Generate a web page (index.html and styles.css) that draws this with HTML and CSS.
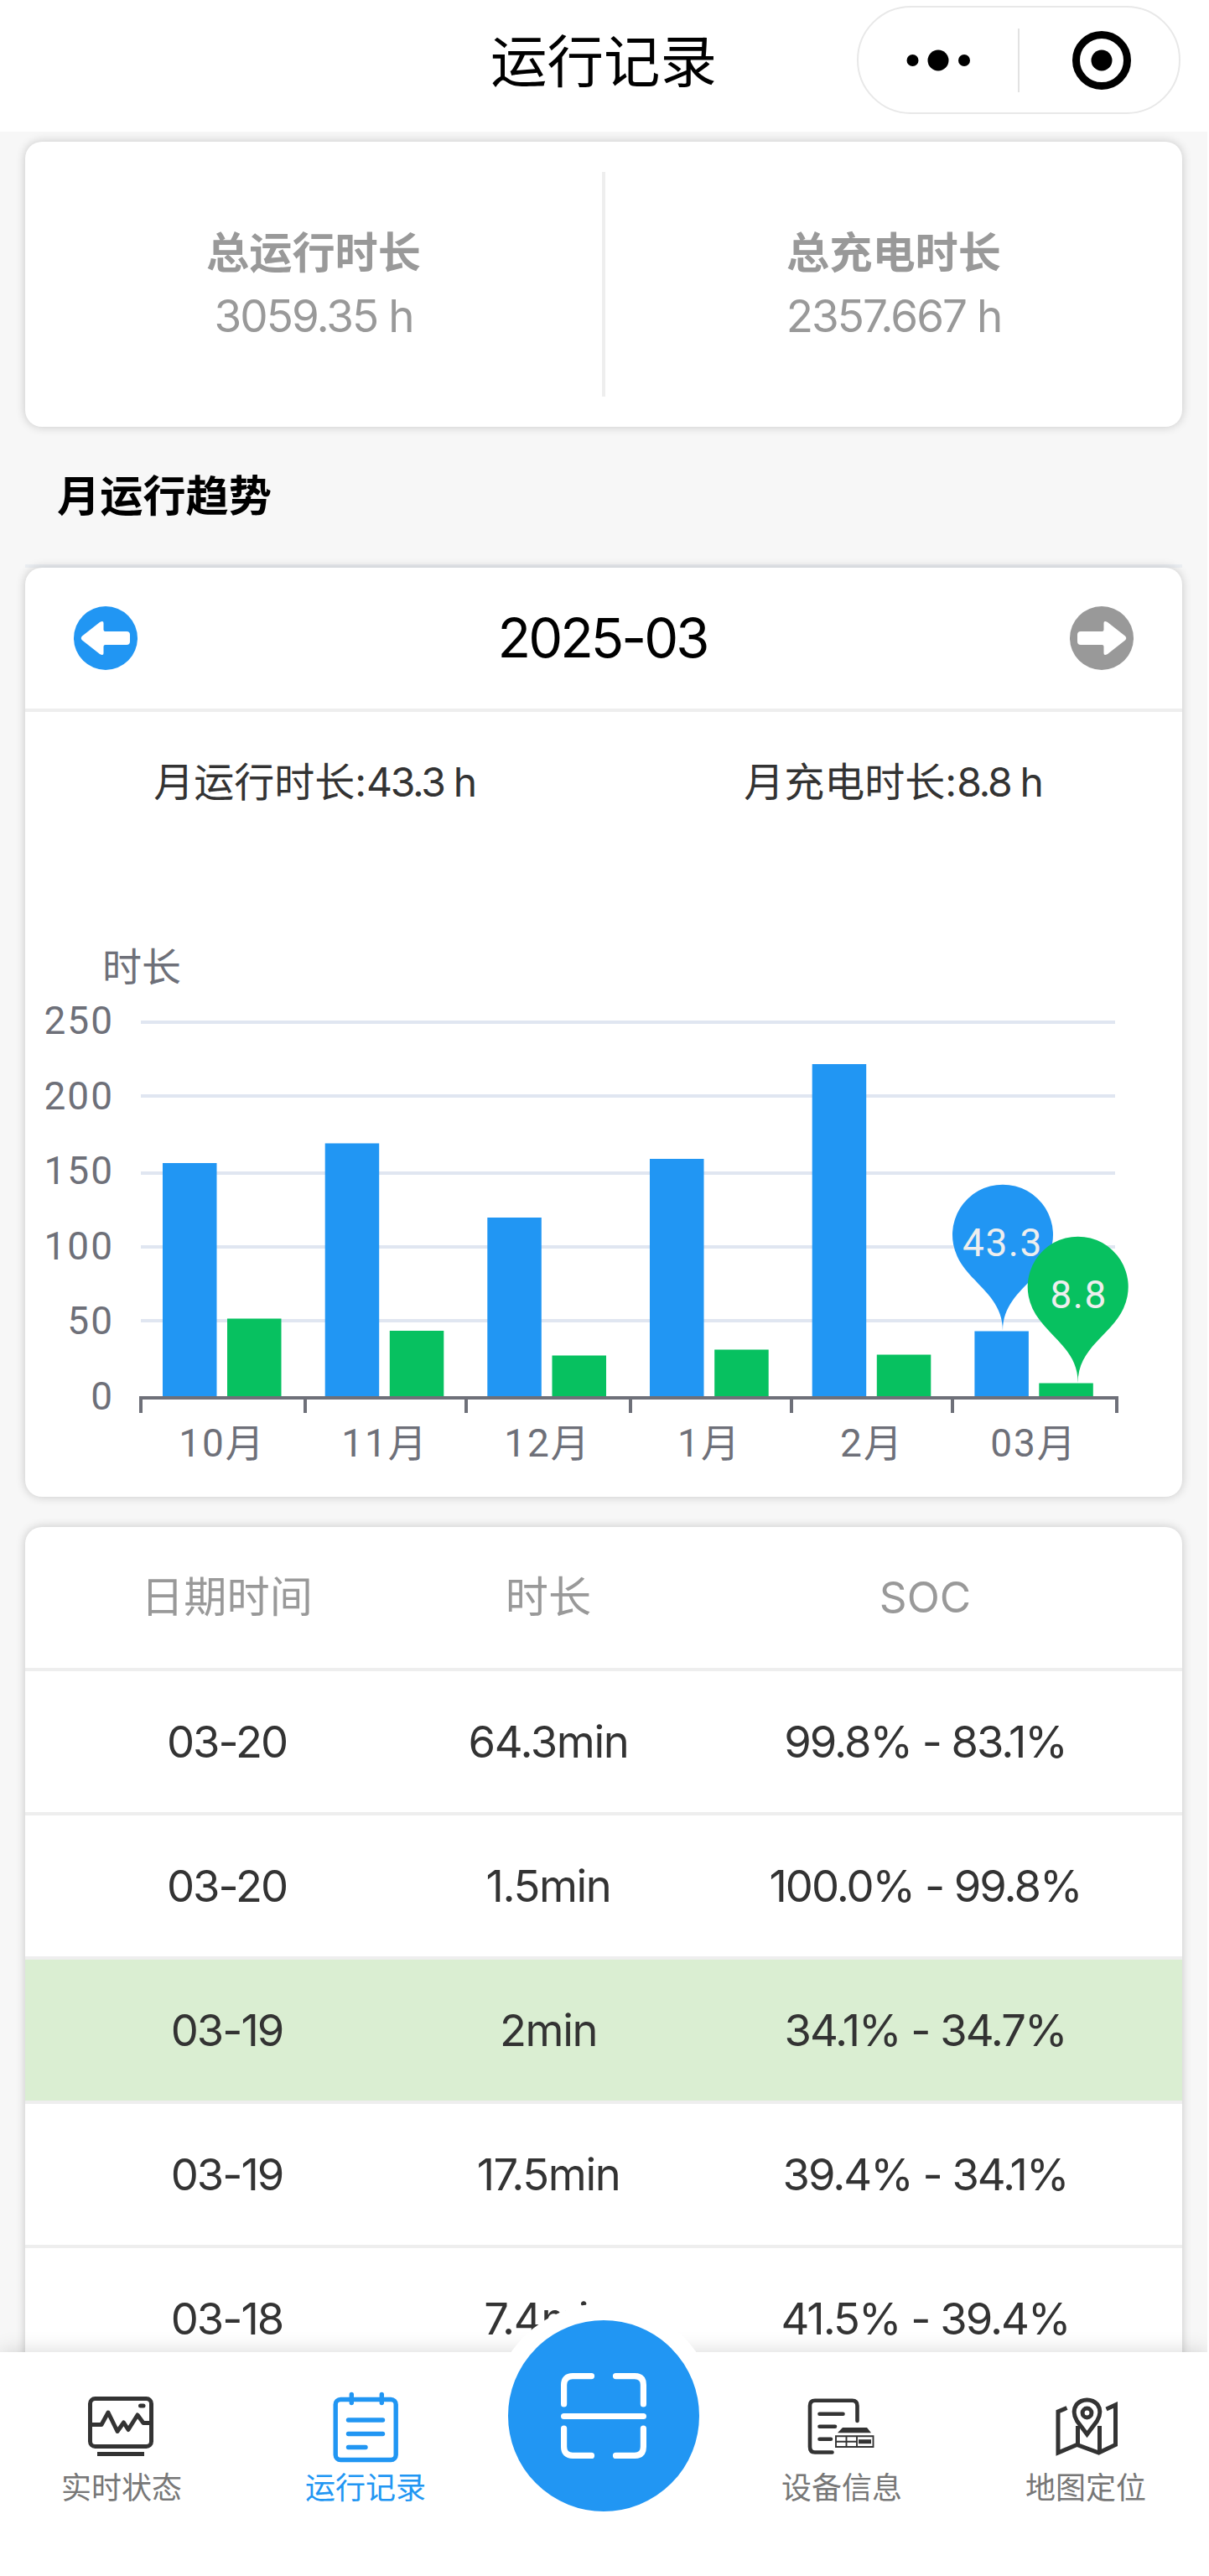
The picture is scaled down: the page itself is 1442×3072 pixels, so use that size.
FILE: index.html
```html
<!DOCTYPE html>
<html lang="zh-CN">
<head>
<meta charset="utf-8">
<title>运行记录</title>
<link rel="stylesheet" href="styles.css">
</head>
<body>
<div class="app">
  <header class="navbar">
    <h1 class="navbar-title">运行记录</h1>
    <div class="capsule">
      <svg class="capsule-more" width="76" height="30" viewBox="0 0 76 30"><circle cx="7.5" cy="15" r="7"/><circle cx="38" cy="15" r="12.5"/><circle cx="69" cy="15" r="7"/></svg>
      <span class="capsule-line"></span>
      <svg class="capsule-close" width="72" height="72" viewBox="0 0 72 72"><circle cx="36" cy="36" r="30.5" fill="none" stroke="#000" stroke-width="9"/><circle cx="36" cy="36" r="12.5"/></svg>
    </div>
  </header>

  <main class="content">
    <section class="card totals">
      <div class="total"><strong class="total-name">总运行时长</strong><span class="total-value">3059.35 h</span></div>
      <div class="total"><strong class="total-name">总充电时长</strong><span class="total-value">2357.667 h</span></div>
    </section>

    <h2 class="section-title">月运行趋势</h2>

    <section class="card trend">
      <div class="month-bar">
        <svg width="76" height="76" viewBox="0 0 76 76"><circle cx="38" cy="38" r="38" fill="#2196f3"/><path d="M10 35.500L31 19Q35.500 16.500 35.500 20V28Q35.500 30 37.500 30H63Q67 30 67 34V42Q67 46 63 46H37.500Q35.500 46 35.500 48V56Q35.500 59.500 31 57L10 40.500Q7.500 38 10 35.500Z" fill="#fff"/></svg>
        <span class="month">2025-03</span>
        <svg width="76" height="76" viewBox="0 0 76 76"><circle cx="38" cy="38" r="38" fill="#999"/><path d="M66 35.500L45 19Q40.500 16.500 40.500 20V28Q40.500 30 38.500 30H13Q9 30 9 34V42Q9 46 13 46H38.500Q40.500 46 40.500 48V56Q40.500 59.500 45 57L66 40.500Q68.500 38 66 35.500Z" fill="#fff"/></svg>
      </div>
      <div class="month-stats"><span>月运行时长:<b>43.3 h</b></span><span>月充电时长:<b>8.8 h</b></span></div>
      <svg class="chart" width="1380" height="769" viewBox="30 1016 1380 769">
        <g stroke="#e0e6f1" stroke-width="4">
          <path d="M168 1219H1330M168 1307H1330M168 1399H1330M168 1487H1330M168 1575H1330"/>
        </g>
        <g fill="#2196f3">
          <rect x="194" y="1387" width="64.500" height="280"/>
          <rect x="387.700" y="1363.500" width="64.500" height="304"/>
          <rect x="581.300" y="1452" width="64.500" height="215"/>
          <rect x="775" y="1382" width="64.500" height="285"/>
          <rect x="968.700" y="1269" width="64.500" height="398"/>
          <rect x="1162.400" y="1587.500" width="64.500" height="80"/>
        </g>
        <g fill="#07c160">
          <rect x="271" y="1572.500" width="64.500" height="94"/>
          <rect x="464.800" y="1587" width="64.500" height="80"/>
          <rect x="658.500" y="1616.500" width="64.500" height="50"/>
          <rect x="852.200" y="1609.500" width="64.500" height="57"/>
          <rect x="1045.800" y="1615.500" width="64.500" height="51"/>
          <rect x="1239.300" y="1649.500" width="64.500" height="17"/>
        </g>
        <path d="M168 1685V1667H1332V1685M364 1667V1685M556 1667V1685M752 1667V1685M944 1667V1685M1136 1667V1685" fill="none" stroke="#6e7079" stroke-width="4"/>
        <g class="axis-text">
          <text class="axis-name" x="122" y="1170">时长</text>
          <g text-anchor="end">
            <text x="136" y="1233">250</text>
            <text x="136" y="1323">200</text>
            <text x="136" y="1412">150</text>
            <text x="136" y="1502">100</text>
            <text x="136" y="1591">50</text>
            <text x="136" y="1681">0</text>
          </g>
          <g text-anchor="middle">
            <text x="265" y="1737">10月</text>
            <text x="459" y="1737">11月</text>
            <text x="653" y="1737">12月</text>
            <text x="846" y="1737">1月</text>
            <text x="1040" y="1737">2月</text>
            <text x="1233" y="1737">03月</text>
          </g>
        </g>
        <g transform="translate(1196 1587)" fill="#2196f3"><path d="M-54.200 -88.600A60 60 0 1 1 54.200 -88.600C38.800 -56.100 0 -42 0 0C0 -42 -38.800 -56.100 -54.200 -88.600Z"/><text class="pin-text" x="0" y="-89">43.3</text></g>
        <g transform="translate(1285.700 1649)" fill="#07c160"><path d="M-54.200 -88.600A60 60 0 1 1 54.200 -88.600C38.800 -56.100 0 -42 0 0C0 -42 -38.800 -56.100 -54.200 -88.600Z"/><text class="pin-text" x="1" y="-89">8.8</text></g>
      </svg>
    </section>

    <section class="card records">
      <div class="row head"><span>日期时间</span><span>时长</span><span>SOC</span></div>
      <div class="row"><span>03-20</span><span class="duration">64.3min</span><span>99.8% - 83.1%</span></div>
      <div class="row"><span>03-20</span><span class="duration">1.5min</span><span>100.0% - 99.8%</span></div>
      <div class="row charging"><span>03-19</span><span class="duration">2min</span><span>34.1% - 34.7%</span></div>
      <div class="row"><span>03-19</span><span class="duration">17.5min</span><span>39.4% - 34.1%</span></div>
      <div class="row"><span>03-18</span><span class="duration">7.4min</span><span>41.5% - 39.4%</span></div>
    </section>
  </main>

  <nav class="tabbar">
    <a class="tab outer">
      <svg width="90" height="90" viewBox="0 0 90 90" fill="none" stroke="#333" stroke-width="5"><rect x="7.500" y="11.500" width="73" height="57" rx="6"/><path d="M8 42.500H21L29 28L40 50.500L47.500 40L53 48.500L64 31L71 40.500H80" stroke-linejoin="round"/><path d="M67.500 20H71" stroke-linecap="round"/><path d="M16 77.500H72"/></svg>
      <span>实时状态</span>
    </a>
    <a class="tab active">
      <svg width="90" height="90" viewBox="0 0 90 90" fill="none" stroke="#2196f3" stroke-width="5.400" stroke-linecap="round"><rect x="9.200" y="12.500" width="72" height="72" rx="6"/><path d="M28.300 6.500V16.500M64.300 6.500V16.500M24.500 37H65.500M24.500 53.500H65.500M24.500 69.500H45"/></svg>
      <span>运行记录</span>
    </a>
    <div class="tab-gap">
      <a class="scan">
        <svg width="102" height="102" viewBox="0 0 102 102" fill="none" stroke="#fff" stroke-width="7.200" stroke-linecap="round"><path d="M3.600 37V14Q3.600 3.600 14 3.600H36.500M65.500 3.600H88Q98.400 3.600 98.400 14V37M98.400 66V88Q98.400 98.400 88 98.400H65.500M36.500 98.400H14Q3.600 98.400 3.600 88V66M3.600 51.500H98.400"/></svg>
      </a>
    </div>
    <a class="tab">
      <svg width="90" height="90" viewBox="0 0 90 90" fill="none" stroke="#333" stroke-width="4.600" stroke-linecap="round"><path d="M63.500 38V20Q63.500 13.800 57.500 13.800H13Q7 13.800 7 20V69Q7 75.500 13 75.500H33.500"/><path d="M18.500 29.700H46.500M18.500 44.700H37M18.500 59.700H32"/><path d="M46 46H75L80 52.200H40Z" fill="#333" stroke="none"/><path d="M38 56.200H82.500V69H38ZM50.500 56V69M63 56V69M38 62.700H63" stroke-width="1.900" stroke-linecap="butt"/><path d="M65 62.700H80" stroke-width="5" stroke-linecap="butt"/></svg>
      <span>设备信息</span>
    </a>
    <a class="tab outer">
      <svg width="90" height="90" viewBox="0 0 90 90" fill="none" stroke="#333" stroke-width="5"><path d="M22.500 22.500L12 27V76L34.500 66.500L60.500 76L80.500 66.500V19L69.500 24M35.500 44V67M61.500 44V75"/><path d="M46.500 54L34.500 38Q28 27 34 18.500Q39 13 46.500 13Q54 13 59 18.500Q65 27 58.500 38Z"/><circle cx="46.500" cy="28.500" r="5.400"/></svg>
      <span>地图定位</span>
    </a>
  </nav>
</div>
</body>
</html>
```
FILE: styles.css
```css
* { box-sizing: border-box; }
body {
  margin: 0;
  background: #fff;
  font-family: Inter, "Noto Sans CJK SC", sans-serif;
  color: #333;
}
.app {
  display: flex;
  flex-direction: column;
  width: 1440px;
  height: 3072px;
  overflow: hidden;
}
h1, h2 { margin: 0; }

.navbar {
  flex: none;
  display: grid;
  grid-template-columns: 1fr auto 1fr;
  height: 157px;
  padding: 7px 32px 0;
  background: #fff;
}
.navbar-title {
  grid-column: 2;
  font-size: 67.500px;
  font-weight: 400;
  line-height: 134px;
  color: #000;
}
.capsule {
  justify-self: end;
  display: flex;
  align-items: center;
  width: 386px;
  height: 129px;
  padding-left: 57px;
  border: 2px solid #e8e8e8;
  border-radius: 65px;
}
.capsule-line {
  width: 2px;
  height: 76px;
  margin: 0 62px 0 57px;
  background: #e2e2e2;
}

.content {
  flex: 1;
  min-height: 0;
  padding: 12px 30px 0;
  overflow: hidden;
  background: #f7f7f7;
}
.card {
  background: #fff;
  border-radius: 20px;
  box-shadow: 0 0 12px rgba(0, 0, 0, .2);
}
.totals {
  display: flex;
  height: 340px;
  padding: 36px 0;
}
.total {
  flex: 1;
  display: flex;
  flex-direction: column;
  align-items: center;
  padding-top: 58px;
  color: #999;
}
.total + .total { border-left: 4px solid #eee; }
.total-name { font-size: 51.200px; line-height: 76px; }
.total-value {
  font-size: 53px;
  line-height: 77px;
  letter-spacing: -2px;
}
.section-title {
  padding: 44px 0 0 38px;
  height: 168px;
  border-bottom: 4px solid #ebeef2;
  font-size: 51.200px;
  line-height: 76px;
  color: #000;
}

.month-bar {
  display: flex;
  justify-content: space-between;
  align-items: center;
  height: 172px;
  padding: 0 58px;
  border-bottom: 4px solid #eee;
}
.month {
  margin-right: 3px;
  font-size: 65px;
  line-height: 80px;
  letter-spacing: -3px;
  color: #000;
}
.month-stats {
  display: flex;
  height: 167px;
  font-size: 48px;
  line-height: 167px;
  text-align: center;
}
.month-stats span { flex: 1; }
.month-stats b { font-weight: 400; letter-spacing: -2.300px; }
.chart { display: block; }
.axis-text {
  font-family: Roboto, "Noto Sans CJK SC", sans-serif;
  font-size: 46px;
  letter-spacing: 2px;
  fill: #6e7079;
}
.axis-name { font-size: 47px; letter-spacing: 0; }
.pin-text {
  font-family: Roboto, sans-serif;
  font-size: 46px;
  letter-spacing: 1.600px;
  text-anchor: middle;
  fill: #eee;
}

.records { margin-top: 36px; height: 1200px; }
.row {
  display: grid;
  grid-template-columns: 481px 286px 1fr;
  height: 172px;
  border-bottom: 4px solid #eee;
  font-size: 52.500px;
  line-height: 169px;
  letter-spacing: -2px;
  text-align: center;
}
.duration { letter-spacing: -1.400px; }
.head { color: #999; letter-spacing: 0; font-size: 51.200px; line-height: 166px; }
.charging { background: #daeed2; }

.tabbar {
  flex: none;
  position: relative;
  display: flex;
  height: 267px;
  background: #fff;
  box-shadow: 0 0 24px rgba(0, 0, 0, .16);
}
.tab {
  width: 292px;
  display: flex;
  flex-direction: column;
  align-items: center;
  padding-top: 44px;
  font-size: 36px;
  line-height: 54px;
  color: #777;
}
.outer { width: 290px; }
.tab svg { margin-bottom: 1px; }
.active { color: #2196f3; }
.tab-gap {
  flex: 1;
  display: flex;
  justify-content: center;
}
.scan {
  flex: none;
  display: flex;
  align-items: center;
  justify-content: center;
  width: 268px;
  height: 268px;
  margin-top: -58px;
  border: 20px solid #fff;
  border-radius: 50%;
  background: #2196f3;
}
```
